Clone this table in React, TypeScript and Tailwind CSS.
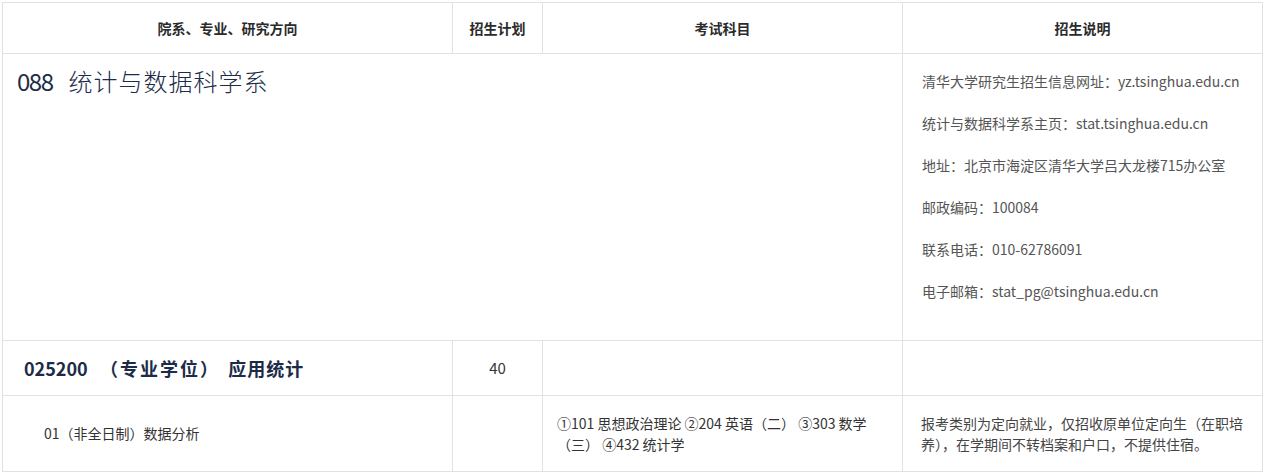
import React from "react";

export default function App() {
  const info = [
    "清华大学研究生招生信息网址：yz.tsinghua.edu.cn",
    "统计与数据科学系主页：stat.tsinghua.edu.cn",
    "地址：北京市海淀区清华大学吕大龙楼715办公室",
    "邮政编码：100084",
    "联系电话：010-62786091",
    "电子邮箱：stat_pg@tsinghua.edu.cn",
  ];
  return (
    <div className="bg-white w-[1265px] h-[474px] pl-[2px] pt-[2px] font-['Noto_Sans_CJK_SC',sans-serif]">
      <div className="grid grid-cols-[450px_90px_360px_360px] grid-rows-[51px_287px_55px_76px] w-[1261px] border-l border-t border-[#dfe2e6] text-[#333]">
        {/* header */}
        <div className="border-r border-b border-[#dfe2e6] flex items-center justify-center text-[14px] font-bold text-[#2b2b2b]">院系、专业、研究方向</div>
        <div className="border-r border-b border-[#dfe2e6] flex items-center justify-center text-[14px] font-bold text-[#2b2b2b]">招生计划</div>
        <div className="border-r border-b border-[#dfe2e6] flex items-center justify-center text-[14px] font-bold text-[#2b2b2b]">考试科目</div>
        <div className="border-r border-b border-[#dfe2e6] flex items-center justify-center text-[14px] font-bold text-[#2b2b2b]">招生说明</div>

        {/* dept row */}
        <div className="col-span-3 border-r border-b border-[#dfe2e6] pl-[14px] pt-[9px]">
          <div className="flex items-baseline text-[24px] leading-[36px] text-[#1c2c48] font-light">
            <span className="tracking-[-1.5px] font-normal">088</span>
            <span className="ml-[16px] tracking-[1px]">统计与数据科学系</span>
          </div>
        </div>
        <div className="border-r border-b border-[#dfe2e6] pl-[19px] pt-[6px] text-[14px] text-[#555]">
          {info.map((t) => (
            <div key={t} className="h-[42px] leading-[42px] whitespace-nowrap">{t}</div>
          ))}
        </div>

        {/* major row */}
        <div className="border-r border-b border-[#dfe2e6] pl-[21px] flex items-center">
          <div className="text-[18px] font-bold text-[#1c2c48] whitespace-pre">
            025200{"   "}<span className="tracking-[2px]">（专业学位）</span>{"  "}<span className="tracking-[1px]">应用统计</span>
          </div>
        </div>
        <div className="border-r border-b border-[#dfe2e6] flex items-center justify-center text-[15px] text-[#333]">40</div>
        <div className="border-r border-b border-[#dfe2e6]"></div>
        <div className="border-r border-b border-[#dfe2e6]"></div>

        {/* direction row */}
        <div className="border-r border-b border-[#dfe2e6] pl-[41px] flex items-center text-[14px] text-[#333]">01（非全日制）数据分析</div>
        <div className="border-r border-b border-[#dfe2e6]"></div>
        <div className="border-r border-b border-[#dfe2e6] pl-[14px] pr-[12px] flex items-center text-[14px] leading-[21px] text-[#333]">
          <div>①101 思想政治理论 ②204 英语（二） ③303 数学（三） ④432 统计学</div>
        </div>
        <div className="border-r border-b border-[#dfe2e6] pl-[18px] pr-[14px] flex items-center text-[14px] leading-[21px] text-[#444]">
          <div>报考类别为定向就业，仅招收原单位定向生（在职培养），在学期间不转档案和户口，不提供住宿。</div>
        </div>
      </div>
    </div>
  );
}
